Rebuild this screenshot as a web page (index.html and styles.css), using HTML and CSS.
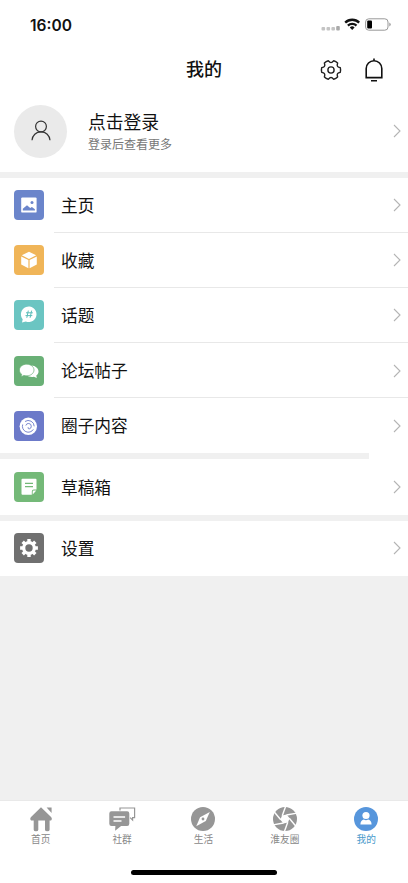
FILE: index.html
```html
<!DOCTYPE html>
<html lang="zh-CN">
<head>
<meta charset="utf-8">
<title>我的</title>
<link rel="stylesheet" href="styles.css">
</head>
<body>
<svg width="0" height="0" class="defs">
  <symbol id="chevron" viewBox="0 0 8 14"><path d="M1 1l6 6-6 6" fill="none" stroke="#b4b4b4" stroke-width="1.1"/></symbol>
</svg>
<div class="app">
  <header class="status">
    <span class="time">16:00</span>
    <svg class="indicators" width="72" height="16" viewBox="0 0 72 16">
      <g fill="#c4c4c4"><rect x="0.500" y="10" width="3.6" height="3.4" rx="1"/><rect x="5.500" y="10" width="3.6" height="3.4" rx="1"/><rect x="10.400" y="10" width="3.6" height="3.4" rx="1"/><rect x="15.200" y="9" width="3.6" height="4.4" rx="1" fill="#aaa"/></g>
      <g fill="none" stroke="#111" stroke-width="2.3"><path d="M24.200 5.6a10 10 0 0 1 14 0"/><path d="M26.900 8.6a6.2 6.2 0 0 1 8.6 0"/></g>
      <path d="M31.200 13l-2.4-2.5a3.5 3.5 0 0 1 4.8 0z" fill="#111"/>
      <rect x="44.600" y="1.8" width="22.4" height="11.4" rx="3.2" fill="none" stroke="#999"/>
      <rect x="46.200" y="3.5" width="4.8" height="8" rx="1" fill="#000"/>
      <path d="M68.300 5.5q3 2 0 4z" fill="#999"/>
    </svg>
  </header>
  <nav class="titlebar">
    <h1>我的</h1>
    <div class="actions">
      <svg width="24" height="26" viewBox="-12 -13 24 26" fill="none" stroke="#222" stroke-width="1.4" stroke-linejoin="round">
        <path d="M9.300-2.300Q9.900 0 9.300 2.300L7.500 2.900Q6.300 3.500 6.200 4.800L6.600 6.900Q5 8.600 2.700 9.200L1.300 7.900Q0 7.200-1.300 7.900L-2.700 9.200Q-5 8.600-6.600 6.900L-6.200 4.800Q-6.300 3.500-7.500 2.900L-9.300 2.300Q-9.900 0-9.300-2.300L-7.500-2.900Q-6.300-3.500-6.200-4.800L-6.600-6.900Q-5-8.600-2.700-9.200L-1.300-7.900Q0-7.200 1.300-7.900L2.700-9.200Q5-8.600 6.600-6.900L6.200-4.800Q6.300-3.500 7.500-2.900Z"/><circle r="3.100"/>
      </svg>
      <svg width="24" height="26" viewBox="0 0 24 26" fill="none" stroke="#111" stroke-width="1.6">
        <path d="M4.200 20.600V11.500a7.800 7.800 0 0 1 15.600 0V20.600M3.400 20.600h17.200M12 3.800V1.600M9 23.700h6"/>
      </svg>
    </div>
  </nav>
  <section class="profile">
    <div class="avatar">
      <svg width="20" height="22" viewBox="0 0 20 22" fill="none" stroke="#333" stroke-width="1.2"><circle cx="10" cy="6.500" r="5.4"/><path d="M1 20.300c.4-5 4-8.4 9-8.4s8.6 3.400 9 8.400"/></svg>
    </div>
    <div class="intro"><div class="login">点击登录</div><div class="hint">登录后查看更多</div></div>
    <svg class="chev"><use href="#chevron"/></svg>
  </section>
  <section class="group">
    <a class="row"><span class="tile blue"><svg viewBox="0 0 30 30"><rect x="7.200" y="7.400" width="15.400" height="15.200" rx="1.200" fill="#fff"/><circle cx="18" cy="12.400" r="1.500" fill="#6b85cb"/><path d="M8.800 20.600v-1.800l4.200-3.500 3.200 2.800 1.700-1 3 2.200v1.300z" fill="#6b85cb"/></svg></span><span class="label">主页</span><svg class="chev"><use href="#chevron"/></svg></a>
    <a class="row"><span class="tile orange"><svg viewBox="0 0 30 30" fill="#fff"><path d="M15 6.800l7.200 3.500L15 14 7.800 10.300zM7.200 11.400l7.200 3.700v8.200L7.200 19.500zM22.800 11.400l-7.200 3.700v8.200l7.200-3.800z"/></svg></span><span class="label">收藏</span><svg class="chev"><use href="#chevron"/></svg></a>
    <a class="row"><span class="tile teal"><svg viewBox="0 0 30 30"><path d="M8 22.600l.7-3.300a7.800 7.800 0 1 1 3.200 2.300z" fill="#fff"/><path d="M14.300 10.600l-1.500 7.200M17.600 10.600l-1.500 7.200M12 12.800h6.800M11.500 15.600h6.800" fill="none" stroke="#5bbdb9"/></svg></span><span class="label">话题</span><svg class="chev"><use href="#chevron"/></svg></a>
    <a class="row"><span class="tile green"><svg viewBox="0 0 30 30" fill="#fff"><path d="M17.500 9.500c4 .3 7 2.800 7 5.900 0 1.700-.8 3.100-2.200 4.200l.5 2.400-2.900-1.300c-2.700.5-5.600 0-7.300-1.400z"/><path d="M12.700 8.200c4.100 0 7.300 2.600 7.300 5.800s-3.200 5.800-7.300 5.800c-1 0-2-.1-2.800-.4L7 20.800l.7-2.500c-1.500-1-2.300-2.600-2.300-4.300 0-3.200 3.200-5.800 7.300-5.800z" stroke="#69b076" stroke-width=".7"/></svg></span><span class="label">论坛帖子</span><svg class="chev"><use href="#chevron"/></svg></a>
    <a class="row"><span class="tile indigo"><svg viewBox="0 0 30 30" fill="none" stroke="#6c7ac9" stroke-width=".9"><circle cx="14.300" cy="15.300" r="8.700" fill="#fff" stroke="none"/><path d="M8.700 13.500a5.900 5.900 0 0 0 10.700 4.800M11 10.500a5.900 5.900 0 0 1 9.200 4.800M11.800 14.500a2.800 2.800 0 1 1 3.300 3.500q-1.200-.1-1-1.800"/></svg></span><span class="label">圈子内容</span><svg class="chev"><use href="#chevron"/></svg></a>
  </section>
  <div class="gap short"></div>
  <section class="group">
    <a class="row"><span class="tile leaf"><svg viewBox="0 0 30 30"><path d="M8.500 6.700h13a1 1 0 0 1 1 1v9.800h-2.600q-2.100 0-2.100 2v3.300H8.500a1 1 0 0 1-1-1V7.700a1 1 0 0 1 1-1zM22.300 18.500l-3.600 4v-2.800q0-1.200 1.200-1.200z" fill="#fff"/><path d="M11 11.300h8M11 14.600h8" stroke="#74b978" stroke-width="1.200"/></svg></span><span class="label">草稿箱</span><svg class="chev"><use href="#chevron"/></svg></a>
  </section>
  <div class="gap"></div>
  <section class="group last">
    <a class="row"><span class="tile gray"><svg viewBox="-15 -15 30 30"><g fill="none" stroke="#fff"><circle r="5.300" stroke-width="3.200"/><path d="M0-6v-2.900M0 6v2.900M-6 0h-2.900M6 0h2.900M4.300-4.300l2-2M-4.300 4.300l-2 2M-4.300-4.300l-2-2M4.300 4.300l2 2" stroke-width="3.400"/></g></svg></span><span class="label">设置</span><svg class="chev"><use href="#chevron"/></svg></a>
  </section>
  <div class="space"></div>
  <footer>
    <div class="tabs">
      <a class="tab"><svg viewBox="0 0 28 26" fill="#969696"><path d="M14 1.200l10.300 10q1.400 1.700-.2 3.300h-1.500v9.300q0 1.500-2.300 1.500T18 23.800V14.500h-6.700v9.300q0 1.500-2.300 1.500t-2.300-1.500v-9.300H4q-1.600-1.600-.2-3.300zM19.600 1.500h5v5.600z"/></svg><span>首页</span></a>
      <a class="tab"><svg viewBox="0 0 28 26"><path d="M12 4.500V2h14.600v9.600h-2V14l-2.500-2.400" fill="none" stroke="#969696" stroke-width="1.200"/><path d="M3.500 5.300h15.600q2.200 0 2.200 2.200v10.200q0 2.200-2.200 2.200h-6l-6 4.900.3-4.900H3.500q-2.200 0-2.200-2.200V7.500q0-2.200 2.200-2.200z" fill="#969696"/><path d="M5.500 11h11.600M5.500 15h8" stroke="#fff" stroke-width="1.300"/></svg><span>社群</span></a>
      <a class="tab"><svg viewBox="0 0 28 26"><circle cx="14" cy="13" r="12" fill="#969696"/><path d="M20.800 5.900l-4 9.100-9.600 5.200 3.900-9z" fill="#fff"/><circle cx="14" cy="13" r="1.400" fill="#969696"/></svg><span>生活</span></a>
      <a class="tab"><svg viewBox="-14 -13 28 26"><circle r="12" fill="#969696"/><g transform="rotate(-10)"><g stroke="#fff" stroke-width="1.400"><path id="blade" d="M4.300 0L10.300 10.400"/><use href="#blade" transform="rotate(60)"/><use href="#blade" transform="rotate(120)"/><use href="#blade" transform="rotate(180)"/><use href="#blade" transform="rotate(240)"/><use href="#blade" transform="rotate(300)"/></g><path d="M4.700 0L2.350 4.070-2.350 4.070-4.700 0-2.350-4.070 2.350-4.070z" fill="#fff"/></g></svg><span>淮友圈</span></a>
      <a class="tab active"><svg viewBox="0 0 28 26"><circle cx="14" cy="13" r="12" fill="#5796dc"/><circle cx="14" cy="9.500" r="3.600" fill="#fff"/><path d="M8.400 18.600c0-3 1.600-4.900 3.500-5.100q2.100 1.300 4.200 0c1.900.2 3.500 2.100 3.500 5.100z" fill="#fff"/></svg><span>我的</span></a>
    </div>
    <div class="home"></div>
  </footer>
</div>
</body>
</html>
```
FILE: styles.css
```css
* { box-sizing: border-box; }
body { margin: 0; background: #fff; color: #111; font-family: Inter, "Noto Sans CJK SC", sans-serif; }
svg { display: block; flex: none; }
.defs { height: 0; }
.app { width: 408px; height: 883px; display: flex; flex-direction: column; overflow: hidden; }
.status { height: 48px; flex: none; display: flex; justify-content: space-between; align-items: center; padding: 2px 15px 0 30px; }
.time { font-size: 15.500px; font-weight: 600; }
.titlebar { height: 42px; flex: none; display: grid; grid-template-columns: 1fr auto 1fr; align-items: center; padding: 0 22px; }
h1 { grid-column: 2; margin: 0; padding-top: 2px; font-size: 18px; line-height: 26px; font-weight: 500; }
.actions { display: flex; justify-content: flex-end; gap: 19.500px; padding-top: 1px; }
.profile { height: 87.500px; flex: none; display: flex; align-items: center; padding: 1px 7px 0 14px; border-bottom: 6px solid #f0f0f0; }
.avatar { width: 53px; height: 53px; border-radius: 50%; background: #eaeaea; display: grid; place-items: center; margin-right: 21px; }
.intro { flex: 1; padding-top: 2px; }
.login { font-size: 17.800px; line-height: 25px; }
.hint { font-size: 12px; line-height: 19px; color: #777; }
.chev { width: 8px; height: 14px; }
.group { flex: none; }
.row { height: 55.200px; display: grid; grid-template-columns: 30px 1fr 8px; column-gap: 17px; align-items: center; padding: 0 7px 0 14px; background: linear-gradient(#e8e8e8, #e8e8e8) 54px 100% / 100% 1px no-repeat; }
.row:last-child { background: none; }
.tile { width: 30px; height: 30px; border-radius: 4px; }
.tile svg { width: 30px; height: 30px; }
.blue { background: #6b85cb; }
.orange { background: #f0b558; }
.teal { background: #6bc5c2; }
.green { background: #69b076; }
.indigo { background: #6c7ac9; }
.leaf { background: #74b978; }
.gray { background: #707070; }
.label { font-size: 16.700px; line-height: 24px; padding-top: 1px; }
.gap { height: 6px; flex: none; background: #f0f0f0; }
.short { width: 369px; }
.space { flex: 1; background: #f0f0f0; }
footer { height: 83px; flex: none; border-top: 1px solid #e9e9e9; display: flex; flex-direction: column; align-items: center; }
.tabs { width: 100%; height: 69px; display: grid; grid-template-columns: repeat(5, 1fr); padding: 5px 1px 0 0; }
.tab { display: flex; flex-direction: column; align-items: center; color: #888; font-size: 9.700px; line-height: 14px; }
.tab svg { width: 28px; height: 26px; margin-bottom: 1px; }
.active { color: #4a9acb; }
.home { width: 146px; height: 5px; border-radius: 3px; background: #000; }
```
